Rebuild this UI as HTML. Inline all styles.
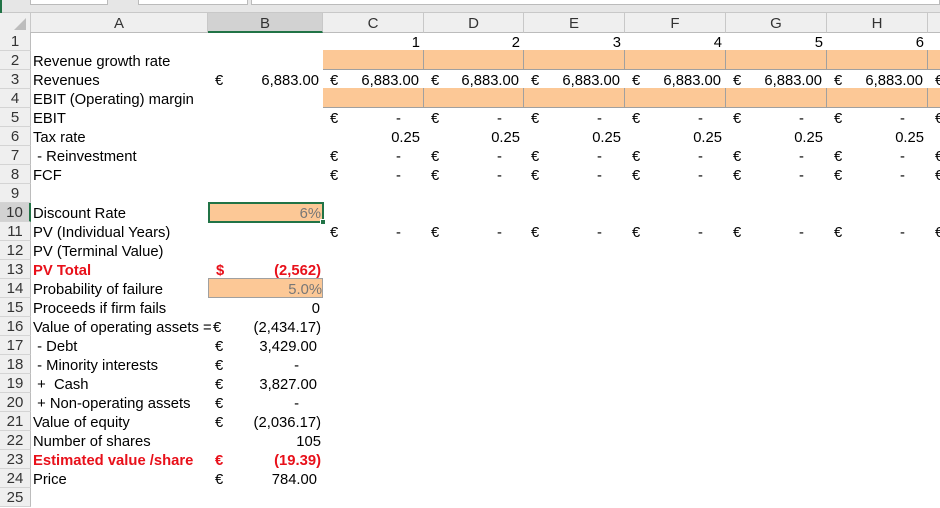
<!DOCTYPE html>
<html><head><meta charset="utf-8"><style>
body{margin:0;width:940px;height:500px;overflow:hidden;background:#fff;font-family:"Liberation Sans","Noto Sans CJK SC",sans-serif;font-size:14.8px;color:#000;position:relative}
div{position:absolute;box-sizing:border-box}
.t{height:19px;line-height:21px;white-space:pre}
.r{text-align:right}
.rh{left:0;width:31px;height:19px;line-height:20px;background:#efefef;border-right:1px solid #bcbcbc;border-bottom:1px solid #d4d4d4;text-align:center;color:#333;font-size:15px}
.ch{top:13px;height:20px;line-height:21px;background:#efefef;border-right:1px solid #c8c8c8;border-bottom:1px solid #bcbcbc;text-align:center;color:#333;font-size:15px}
.o{background:#fcc896;border-right:1px solid #a0a0a0;border-bottom:1px solid #a0a0a0;height:20px}
.red{color:#e8101a;font-weight:bold}
.g{color:#777}
</style></head><body>
<div style="left:0;top:0;width:940px;height:13px;background:#e6e6e6;border-bottom:1px solid #c8c8c8"></div>
<div style="left:30px;top:0;width:78px;height:5px;background:#fff;border:1px solid #bbb;border-top:0"></div>
<div style="left:138px;top:0;width:110px;height:5px;background:#fff;border:1px solid #bbb;border-top:0"></div>
<div style="left:251px;top:0;width:689px;height:5px;background:#fff;border:1px solid #bbb;border-top:0"></div>
<div style="left:0;top:0;width:2px;height:40px;background:#217346"></div>

<div class="ch" style="left:0;width:31px"></div>
<div style="left:14px;top:18px;width:0;height:0;border-left:12px solid transparent;border-bottom:12px solid #bdbdbd"></div>
<div class="ch" style="left:31px;width:177px">A</div>
<div class="ch" style="left:208px;width:115px;background:#d2d2d2;border-bottom:2px solid #217346">B</div>
<div class="ch" style="left:323px;width:101px">C</div>
<div class="ch" style="left:424px;width:100px">D</div>
<div class="ch" style="left:524px;width:101px">E</div>
<div class="ch" style="left:625px;width:101px">F</div>
<div class="ch" style="left:726px;width:101px">G</div>
<div class="ch" style="left:827px;width:101px">H</div>
<div class="ch" style="left:928px;width:20px"></div>

<div class="rh" style="top:32px">1</div>
<div class="rh" style="top:51px">2</div>
<div class="rh" style="top:70px">3</div>
<div class="rh" style="top:89px">4</div>
<div class="rh" style="top:108px">5</div>
<div class="rh" style="top:127px">6</div>
<div class="rh" style="top:146px">7</div>
<div class="rh" style="top:165px">8</div>
<div class="rh" style="top:184px">9</div>
<div class="rh" style="top:203px;background:#d2d2d2;border-right:2px solid #217346">10</div>
<div class="rh" style="top:222px">11</div>
<div class="rh" style="top:241px">12</div>
<div class="rh" style="top:260px">13</div>
<div class="rh" style="top:279px">14</div>
<div class="rh" style="top:298px">15</div>
<div class="rh" style="top:317px">16</div>
<div class="rh" style="top:336px">17</div>
<div class="rh" style="top:355px">18</div>
<div class="rh" style="top:374px">19</div>
<div class="rh" style="top:393px">20</div>
<div class="rh" style="top:412px">21</div>
<div class="rh" style="top:431px">22</div>
<div class="rh" style="top:450px">23</div>
<div class="rh" style="top:469px">24</div>
<div class="rh" style="top:488px">25</div>

<div class="o" style="left:323px;top:50px;width:101px"></div><div class="o" style="left:424px;top:50px;width:100px"></div><div class="o" style="left:524px;top:50px;width:101px"></div><div class="o" style="left:625px;top:50px;width:101px"></div><div class="o" style="left:726px;top:50px;width:101px"></div><div class="o" style="left:827px;top:50px;width:101px"></div><div class="o" style="left:928px;top:50px;width:20px"></div>
<div class="o" style="left:323px;top:88px;width:101px"></div><div class="o" style="left:424px;top:88px;width:100px"></div><div class="o" style="left:524px;top:88px;width:101px"></div><div class="o" style="left:625px;top:88px;width:101px"></div><div class="o" style="left:726px;top:88px;width:101px"></div><div class="o" style="left:827px;top:88px;width:101px"></div><div class="o" style="left:928px;top:88px;width:20px"></div>
<div class="o" style="left:208px;top:278px;width:115px;border:1px solid #a0a0a0"></div>
<div style="left:208px;top:202px;width:116px;height:21px;background:#fcc896;border:2px solid #217346"></div>
<div style="left:320px;top:219px;width:6px;height:6px;background:#217346;border:1px solid #fff"></div>

<div class="t" style="left:33px;top:52px">Revenue growth rate</div>
<div class="t" style="left:33px;top:71px">Revenues</div>
<div class="t" style="left:33px;top:90px">EBIT (Operating) margin</div>
<div class="t" style="left:33px;top:109px">EBIT</div>
<div class="t" style="left:33px;top:128px">Tax rate</div>
<div class="t" style="left:33px;top:147px"> - Reinvestment</div>
<div class="t" style="left:33px;top:166px">FCF</div>
<div class="t" style="left:33px;top:204px">Discount Rate</div>
<div class="t" style="left:33px;top:223px">PV (Individual Years)</div>
<div class="t" style="left:33px;top:242px">PV (Terminal Value)</div>
<div class="t red" style="left:33px;top:261px">PV Total</div>
<div class="t" style="left:33px;top:280px">Probability of failure</div>
<div class="t" style="left:33px;top:299px">Proceeds if firm fails</div>
<div class="t" style="left:33px;top:318px">Value of operating assets =</div>
<div class="t" style="left:33px;top:337px"> - Debt</div>
<div class="t" style="left:33px;top:356px"> - Minority interests</div>
<div class="t" style="left:33px;top:375px"> +  Cash</div>
<div class="t" style="left:33px;top:394px"> + Non-operating assets</div>
<div class="t" style="left:33px;top:413px">Value of equity</div>
<div class="t" style="left:33px;top:432px">Number of shares</div>
<div class="t red" style="left:33px;top:451px">Estimated value /share</div>
<div class="t" style="left:33px;top:470px">Price</div>

<div class="t" style="left:215px;top:71px">€</div><div class="t r" style="left:208px;width:111px;top:71px">6,883.00</div>
<div class="t r g" style="left:208px;width:113px;top:204px">6%</div>
<div class="t red" style="left:216px;top:261px">$</div><div class="t r red" style="left:208px;width:113px;top:261px">(2,562)</div>
<div class="t r g" style="left:208px;width:114px;top:280px">5.0%</div>
<div class="t r" style="left:208px;width:112px;top:299px">0</div>
<div class="t" style="left:213px;top:318px">€</div><div class="t r" style="left:208px;width:113px;top:318px">(2,434.17)</div>
<div class="t" style="left:215px;top:337px">€</div><div class="t r" style="left:208px;width:109px;top:337px">3,429.00</div>
<div class="t" style="left:215px;top:356px">€</div><div class="t r" style="left:208px;width:91px;top:356px">-</div>
<div class="t" style="left:215px;top:375px">€</div><div class="t r" style="left:208px;width:109px;top:375px">3,827.00</div>
<div class="t" style="left:215px;top:394px">€</div><div class="t r" style="left:208px;width:91px;top:394px">-</div>
<div class="t" style="left:215px;top:413px">€</div><div class="t r" style="left:208px;width:113px;top:413px">(2,036.17)</div>
<div class="t r" style="left:208px;width:113px;top:432px">105</div>
<div class="t red" style="left:215px;top:451px">€</div><div class="t r red" style="left:208px;width:113px;top:451px">(19.39)</div>
<div class="t" style="left:215px;top:470px">€</div><div class="t r" style="left:208px;width:109px;top:470px">784.00</div>

<div class="t r" style="left:323px;width:97px;top:33px">1</div>
<div class="t r" style="left:424px;width:96px;top:33px">2</div>
<div class="t r" style="left:524px;width:97px;top:33px">3</div>
<div class="t r" style="left:625px;width:97px;top:33px">4</div>
<div class="t r" style="left:726px;width:97px;top:33px">5</div>
<div class="t r" style="left:827px;width:97px;top:33px">6</div>

<div class="t" style="left:330px;top:71px">€</div><div class="t r" style="left:323px;width:96px;top:71px">6,883.00</div>
<div class="t" style="left:431px;top:71px">€</div><div class="t r" style="left:424px;width:95px;top:71px">6,883.00</div>
<div class="t" style="left:531px;top:71px">€</div><div class="t r" style="left:524px;width:96px;top:71px">6,883.00</div>
<div class="t" style="left:632px;top:71px">€</div><div class="t r" style="left:625px;width:96px;top:71px">6,883.00</div>
<div class="t" style="left:733px;top:71px">€</div><div class="t r" style="left:726px;width:96px;top:71px">6,883.00</div>
<div class="t" style="left:834px;top:71px">€</div><div class="t r" style="left:827px;width:96px;top:71px">6,883.00</div>
<div class="t" style="left:935px;top:71px">€</div>

<div class="t r" style="left:323px;width:97px;top:128px">0.25</div>
<div class="t r" style="left:424px;width:96px;top:128px">0.25</div>
<div class="t r" style="left:524px;width:97px;top:128px">0.25</div>
<div class="t r" style="left:625px;width:97px;top:128px">0.25</div>
<div class="t r" style="left:726px;width:97px;top:128px">0.25</div>
<div class="t r" style="left:827px;width:97px;top:128px">0.25</div>

<div class="t" style="left:330px;top:109px">€</div><div class="t" style="left:396px;top:109px">-</div>
<div class="t" style="left:431px;top:109px">€</div><div class="t" style="left:497px;top:109px">-</div>
<div class="t" style="left:531px;top:109px">€</div><div class="t" style="left:597px;top:109px">-</div>
<div class="t" style="left:632px;top:109px">€</div><div class="t" style="left:698px;top:109px">-</div>
<div class="t" style="left:733px;top:109px">€</div><div class="t" style="left:799px;top:109px">-</div>
<div class="t" style="left:834px;top:109px">€</div><div class="t" style="left:900px;top:109px">-</div>
<div class="t" style="left:935px;top:109px">€</div>

<div class="t" style="left:330px;top:147px">€</div><div class="t" style="left:396px;top:147px">-</div>
<div class="t" style="left:431px;top:147px">€</div><div class="t" style="left:497px;top:147px">-</div>
<div class="t" style="left:531px;top:147px">€</div><div class="t" style="left:597px;top:147px">-</div>
<div class="t" style="left:632px;top:147px">€</div><div class="t" style="left:698px;top:147px">-</div>
<div class="t" style="left:733px;top:147px">€</div><div class="t" style="left:799px;top:147px">-</div>
<div class="t" style="left:834px;top:147px">€</div><div class="t" style="left:900px;top:147px">-</div>
<div class="t" style="left:935px;top:147px">€</div>

<div class="t" style="left:330px;top:166px">€</div><div class="t" style="left:396px;top:166px">-</div>
<div class="t" style="left:431px;top:166px">€</div><div class="t" style="left:497px;top:166px">-</div>
<div class="t" style="left:531px;top:166px">€</div><div class="t" style="left:597px;top:166px">-</div>
<div class="t" style="left:632px;top:166px">€</div><div class="t" style="left:698px;top:166px">-</div>
<div class="t" style="left:733px;top:166px">€</div><div class="t" style="left:799px;top:166px">-</div>
<div class="t" style="left:834px;top:166px">€</div><div class="t" style="left:900px;top:166px">-</div>
<div class="t" style="left:935px;top:166px">€</div>

<div class="t" style="left:330px;top:223px">€</div><div class="t" style="left:396px;top:223px">-</div>
<div class="t" style="left:431px;top:223px">€</div><div class="t" style="left:497px;top:223px">-</div>
<div class="t" style="left:531px;top:223px">€</div><div class="t" style="left:597px;top:223px">-</div>
<div class="t" style="left:632px;top:223px">€</div><div class="t" style="left:698px;top:223px">-</div>
<div class="t" style="left:733px;top:223px">€</div><div class="t" style="left:799px;top:223px">-</div>
<div class="t" style="left:834px;top:223px">€</div><div class="t" style="left:900px;top:223px">-</div>
<div class="t" style="left:935px;top:223px">€</div>
</body></html>
